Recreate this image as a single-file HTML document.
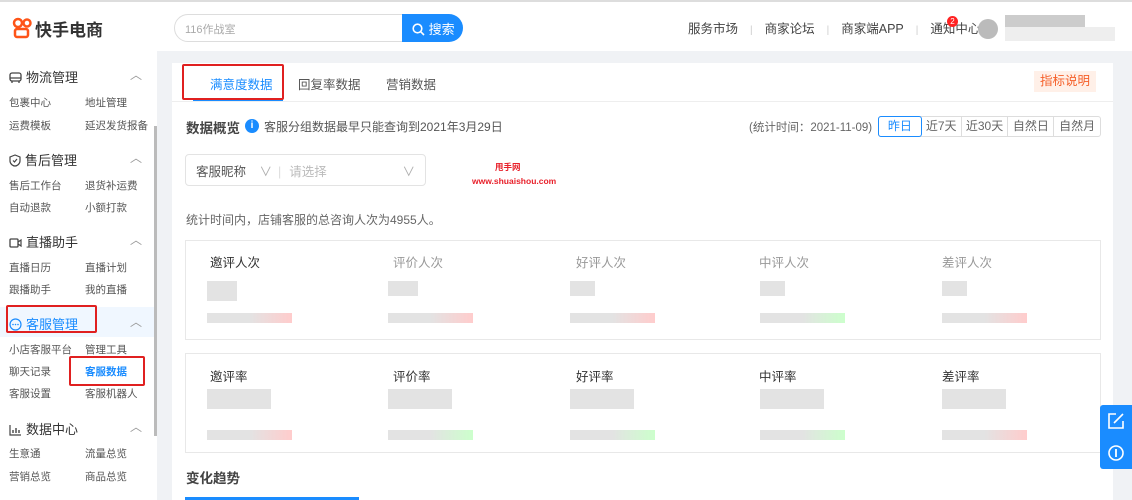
<!DOCTYPE html><html><head><meta charset="utf-8"><style>
*{margin:0;padding:0;box-sizing:border-box}
body{width:1132px;height:500px;overflow:hidden;background:#f0f2f5;font-family:"Liberation Sans","Noto Sans CJK SC",sans-serif;color:#333;position:relative;font-size:12px}
.a{position:absolute}
.hdr{left:0;top:0;width:1132px;height:51px;background:#fff;border-top:2px solid #ddd}
.side{left:0;top:51px;width:157px;height:449px;background:#fff}
.grp{font-size:13px;color:#333}
.grp svg{vertical-align:-2px;margin-right:4px}
.sub{font-size:10.5px;color:#555}
.car{font-size:12px;color:#999}
.main{left:172px;top:63px;width:941px;height:437px;background:#fff}
.blur{background:#e3e3e3}
.card{border:1px solid #e8e8e8;background:#fff}
.rb{border:2px solid #e02020;border-radius:2px}
.sep{color:#ccc;margin:0 6px;font-size:10px}
</style></head><body>
<div class="a hdr">
 <svg class="a" style="left:12px;top:15px" width="20" height="22" viewBox="0 0 20 22"><circle cx="6" cy="6" r="4" fill="none" stroke="#fe5418" stroke-width="2.5"/><circle cx="15" cy="6" r="3.5" fill="none" stroke="#fe5418" stroke-width="2.5"/><rect x="3" y="12" width="13" height="8" rx="2" fill="none" stroke="#fe5418" stroke-width="2.5"/></svg>
 <div class="a" style="left:35px;top:14px;font-size:17px;font-weight:bold;color:#333">快手电商</div>
 <div class="a" style="left:174px;top:12px;width:230px;height:28px;border:1px solid #ddd;border-radius:14px 0 0 14px;font-size:11px;color:#aaa;padding:6px 10px">116作战室</div>
 <div class="a" style="left:402px;top:12px;width:61px;height:28px;background:#1a8cff;border-radius:0 14px 14px 0;color:#fff;font-size:13px;padding:5px 0 0 10px">
  <svg width="13" height="13" viewBox="0 0 13 13" style="vertical-align:-2px"><circle cx="5.5" cy="5.5" r="4.3" fill="none" stroke="#fff" stroke-width="1.6"/><path d="M8.6 8.6L12 12" stroke="#fff" stroke-width="1.6"/></svg> 搜索</div>
 <div class="a" style="left:688px;top:16px;font-size:12.5px;color:#444;white-space:nowrap">服务市场<span class="sep" style="margin:0 12px">|</span>商家论坛<span class="sep" style="margin:0 12px">|</span>商家端APP<span class="sep" style="margin:0 12px">|</span>通知中心<span class="sep" style="margin:0 10px">|</span></div>
 <div class="a" style="left:947px;top:14px;width:11px;height:11px;border-radius:50%;background:#f22;color:#fff;font-size:8px;text-align:center;line-height:11px">2</div>
 <div class="a" style="left:978px;top:17px;width:20px;height:20px;border-radius:50%;background:#bbb"></div>
 <div class="a" style="left:1005px;top:13px;width:80px;height:12px;background:#ccc"></div>
 <div class="a" style="left:1005px;top:25px;width:110px;height:14px;background:#eee"></div>
</div>
<div class="a side">
 <div class="a" style="left:154px;top:75px;width:3px;height:310px;background:#bbb"></div>
 <div class="a grp" style="left:9px;top:16px"><svg width="13" height="12" viewBox="0 0 13 12"><rect x="1" y="1" width="11" height="8" rx="2" fill="none" stroke="#444" stroke-width="1.3"/><path d="M1 6h11M3 9v2M10 9v2" stroke="#444" stroke-width="1.3"/></svg>物流管理</div><div class="a car" style="left:130px;top:15px">︿</div>
 <div class="a sub" style="left:9px;top:44px">包裹中心</div><div class="a sub" style="left:85px;top:44px">地址管理</div>
 <div class="a sub" style="left:9px;top:67px">运费模板</div><div class="a sub" style="left:85px;top:67px">延迟发货报备</div>
 <div class="a grp" style="left:9px;top:99px"><svg width="12" height="13" viewBox="0 0 12 13"><path d="M6 1L1 3v4c0 3 3 5 5 5s5-2 5-5V3z" fill="none" stroke="#444" stroke-width="1.2"/><path d="M4 6.5l1.5 1.5L8 5" fill="none" stroke="#444" stroke-width="1.2"/></svg>售后管理</div><div class="a car" style="left:130px;top:98px">︿</div>
 <div class="a sub" style="left:9px;top:127px">售后工作台</div><div class="a sub" style="left:85px;top:127px">退货补运费</div>
 <div class="a sub" style="left:9px;top:149px">自动退款</div><div class="a sub" style="left:85px;top:149px">小额打款</div>
 <div class="a grp" style="left:9px;top:181px"><svg width="13" height="12" viewBox="0 0 13 12"><rect x="1" y="2" width="8" height="8" rx="1" fill="none" stroke="#444" stroke-width="1.3"/><path d="M9 5l3-2v6l-3-2" fill="none" stroke="#444" stroke-width="1.2"/></svg>直播助手</div><div class="a car" style="left:130px;top:180px">︿</div>
 <div class="a sub" style="left:9px;top:209px">直播日历</div><div class="a sub" style="left:85px;top:209px">直播计划</div>
 <div class="a sub" style="left:9px;top:231px">跟播助手</div><div class="a sub" style="left:85px;top:231px">我的直播</div>
 <div class="a" style="left:0;top:256px;width:154px;height:30px;background:#f0f7ff"></div>
 <div class="a grp" style="left:9px;top:263px;color:#1a8cff"><svg width="13" height="13" viewBox="0 0 13 13"><circle cx="6.5" cy="6.5" r="5.5" fill="none" stroke="#1a8cff" stroke-width="1.2"/><circle cx="4" cy="6.5" r=".8" fill="#1a8cff"/><circle cx="6.5" cy="6.5" r=".8" fill="#1a8cff"/><circle cx="9" cy="6.5" r=".8" fill="#1a8cff"/></svg>客服管理</div><div class="a car" style="left:130px;top:262px">︿</div>
 <div class="a rb" style="left:6px;top:254px;width:91px;height:28px"></div>
 <div class="a sub" style="left:9px;top:291px">小店客服平台</div><div class="a sub" style="left:85px;top:291px">管理工具</div>
 <div class="a sub" style="left:9px;top:313px">聊天记录</div><div class="a sub" style="left:85px;top:313px;color:#1a8cff;font-weight:bold">客服数据</div>
 <div class="a rb" style="left:69px;top:305px;width:76px;height:30px"></div>
 <div class="a sub" style="left:9px;top:335px">客服设置</div><div class="a sub" style="left:85px;top:335px">客服机器人</div>
 <div class="a grp" style="left:9px;top:368px"><svg width="13" height="12" viewBox="0 0 13 12"><path d="M1 1v10h11" fill="none" stroke="#444" stroke-width="1.2"/><path d="M4 9V6M7 9V4M10 9V6" stroke="#444" stroke-width="1.4"/></svg>数据中心</div><div class="a car" style="left:130px;top:367px">︿</div>
 <div class="a sub" style="left:9px;top:395px">生意通</div><div class="a sub" style="left:85px;top:395px">流量总览</div>
 <div class="a sub" style="left:9px;top:418px">营销总览</div><div class="a sub" style="left:85px;top:418px">商品总览</div>
</div>
<div class="a main">
 <div class="a" style="left:0;top:38px;width:941px;height:1px;background:#eee"></div>
 <div class="a" style="left:21px;top:36px;width:90px;height:2px;background:#1a8cff"></div>
 <div class="a rb" style="left:10px;top:1px;width:102px;height:36px"></div>
 <div class="a" style="left:38px;top:11px;font-size:12.5px;color:#1a8cff">满意度数据</div>
 <div class="a" style="left:126px;top:11px;font-size:12.5px;color:#555">回复率数据</div>
 <div class="a" style="left:214px;top:11px;font-size:12.5px;color:#555">营销数据</div>
 <div class="a" style="left:862px;top:8px;width:62px;height:21px;background:#fff0e8;color:#f5602a;font-size:12.5px;text-align:center;line-height:21px">指标说明</div>
 <div class="a" style="left:14px;top:54px;font-size:13.5px;font-weight:bold;color:#444">数据概览</div>
 <div class="a" style="left:73px;top:56px;width:14px;height:14px;border-radius:50%;background:#1a8cff;color:#fff;font-size:10px;text-align:center;line-height:14px;font-weight:bold">i</div>
 <div class="a" style="left:92px;top:55px;font-size:12px;color:#555">客服分组数据最早只能查询到2021年3月29日</div>
 <div class="a" style="left:577px;top:56px;font-size:11.5px;color:#666">(统计时间：2021-11-09)</div>
 <div class="a" style="left:706px;top:53px;width:223px;height:21px;border:1px solid #ddd;border-radius:3px;font-size:12px;color:#666;display:flex;line-height:19px">
  <div style="width:44px;text-align:center;border:1px solid #1a8cff;color:#1a8cff;margin:-1px 0 -1px -1px;border-radius:3px">昨日</div>
  <div style="width:40px;text-align:center;border-right:1px solid #ddd">近7天</div>
  <div style="width:47px;text-align:center;border-right:1px solid #ddd">近30天</div>
  <div style="width:46px;text-align:center;border-right:1px solid #ddd">自然日</div>
  <div style="width:46px;text-align:center">自然月</div></div>
 <div class="a" style="left:13px;top:91px;width:241px;height:32px;border:1px solid #e3e3e3;border-radius:4px;font-size:12.5px;color:#555;padding:6px 10px">客服昵称 <span style="color:#aaa;margin-left:10px">∨</span><span style="color:#ddd;margin-left:6px">|</span><span style="color:#bbb;margin-left:8px">请选择</span><span style="color:#aaa;position:absolute;right:10px">∨</span></div>
 <div class="a" style="left:323px;top:98px;font-size:8.5px;color:#e8202a;font-weight:bold">甩手网</div>
 <div class="a" style="left:300px;top:113px;font-size:8.5px;color:#e8202a;font-weight:bold">www.shuaishou.com</div>
 <div class="a" style="left:14px;top:148px;font-size:12px;color:#666">统计时间内，店铺客服的总咨询人次为4955人。</div>
 <div class="a card" style="left:13px;top:177px;width:916px;height:100px"></div>
 <div class="a card" style="left:13px;top:290px;width:916px;height:100px"></div>
 <div class="a" style="left:14px;top:404px;font-size:13.5px;font-weight:bold;color:#444">变化趋势</div>
 <div class="a" style="left:13px;top:434px;width:174px;height:3px;background:#1a8cff"></div>
</div>
<div class="a" style="left:210px;top:252px;font-size:12.5px;color:#333">邀评人次</div>
<div class="a" style="left:393px;top:252px;font-size:12.5px;color:#999">评价人次</div>
<div class="a" style="left:576px;top:252px;font-size:12.5px;color:#999">好评人次</div>
<div class="a" style="left:759px;top:252px;font-size:12.5px;color:#999">中评人次</div>
<div class="a" style="left:942px;top:252px;font-size:12.5px;color:#999">差评人次</div>
<div class="a" style="left:210px;top:366px;font-size:12.5px;color:#333">邀评率</div>
<div class="a" style="left:393px;top:366px;font-size:12.5px;color:#333">评价率</div>
<div class="a" style="left:576px;top:366px;font-size:12.5px;color:#333">好评率</div>
<div class="a" style="left:759px;top:366px;font-size:12.5px;color:#333">中评率</div>
<div class="a" style="left:942px;top:366px;font-size:12.5px;color:#333">差评率</div>
<div class="a blur" style="left:207px;top:281px;width:30px;height:20px"></div>
<div class="a blur" style="left:388px;top:281px;width:30px;height:15px"></div>
<div class="a blur" style="left:570px;top:281px;width:25px;height:15px"></div>
<div class="a blur" style="left:760px;top:281px;width:25px;height:15px"></div>
<div class="a blur" style="left:942px;top:281px;width:25px;height:15px"></div>
<div class="a" style="left:207px;top:313px;width:85px;height:10px;background:linear-gradient(90deg,#e3e3e3 50%,#fcc)"></div>
<div class="a" style="left:388px;top:313px;width:85px;height:10px;background:linear-gradient(90deg,#e3e3e3 50%,#fcc)"></div>
<div class="a" style="left:570px;top:313px;width:85px;height:10px;background:linear-gradient(90deg,#e3e3e3 50%,#fcc)"></div>
<div class="a" style="left:760px;top:313px;width:85px;height:10px;background:linear-gradient(90deg,#e3e3e3 50%,#cfc)"></div>
<div class="a" style="left:942px;top:313px;width:85px;height:10px;background:linear-gradient(90deg,#e3e3e3 50%,#fcc)"></div>
<div class="a blur" style="left:207px;top:389px;width:64px;height:20px"></div>
<div class="a blur" style="left:388px;top:389px;width:64px;height:20px"></div>
<div class="a blur" style="left:570px;top:389px;width:64px;height:20px"></div>
<div class="a blur" style="left:760px;top:389px;width:64px;height:20px"></div>
<div class="a blur" style="left:942px;top:389px;width:64px;height:20px"></div>
<div class="a" style="left:207px;top:430px;width:85px;height:10px;background:linear-gradient(90deg,#e3e3e3 50%,#fcc)"></div>
<div class="a" style="left:388px;top:430px;width:85px;height:10px;background:linear-gradient(90deg,#e3e3e3 50%,#cfc)"></div>
<div class="a" style="left:570px;top:430px;width:85px;height:10px;background:linear-gradient(90deg,#e3e3e3 50%,#cfc)"></div>
<div class="a" style="left:760px;top:430px;width:85px;height:10px;background:linear-gradient(90deg,#e3e3e3 50%,#cfc)"></div>
<div class="a" style="left:942px;top:430px;width:85px;height:10px;background:linear-gradient(90deg,#e3e3e3 50%,#fcc)"></div>
<div class="a" style="left:1100px;top:405px;width:32px;height:64px;background:#1a8cff;border-radius:3px 0 0 3px"></div>
<svg class="a" style="left:1107px;top:412px" width="18" height="18" viewBox="0 0 18 18"><path d="M9 2H2v14h14V9" fill="none" stroke="#fff" stroke-width="1.6"/><path d="M7 11l9-9" stroke="#fff" stroke-width="1.6"/></svg>
<svg class="a" style="left:1107px;top:444px" width="18" height="18" viewBox="0 0 18 18"><circle cx="9" cy="9" r="7" fill="none" stroke="#fff" stroke-width="1.6"/><path d="M9 5v8" stroke="#fff" stroke-width="1.8"/></svg>
</body></html>
